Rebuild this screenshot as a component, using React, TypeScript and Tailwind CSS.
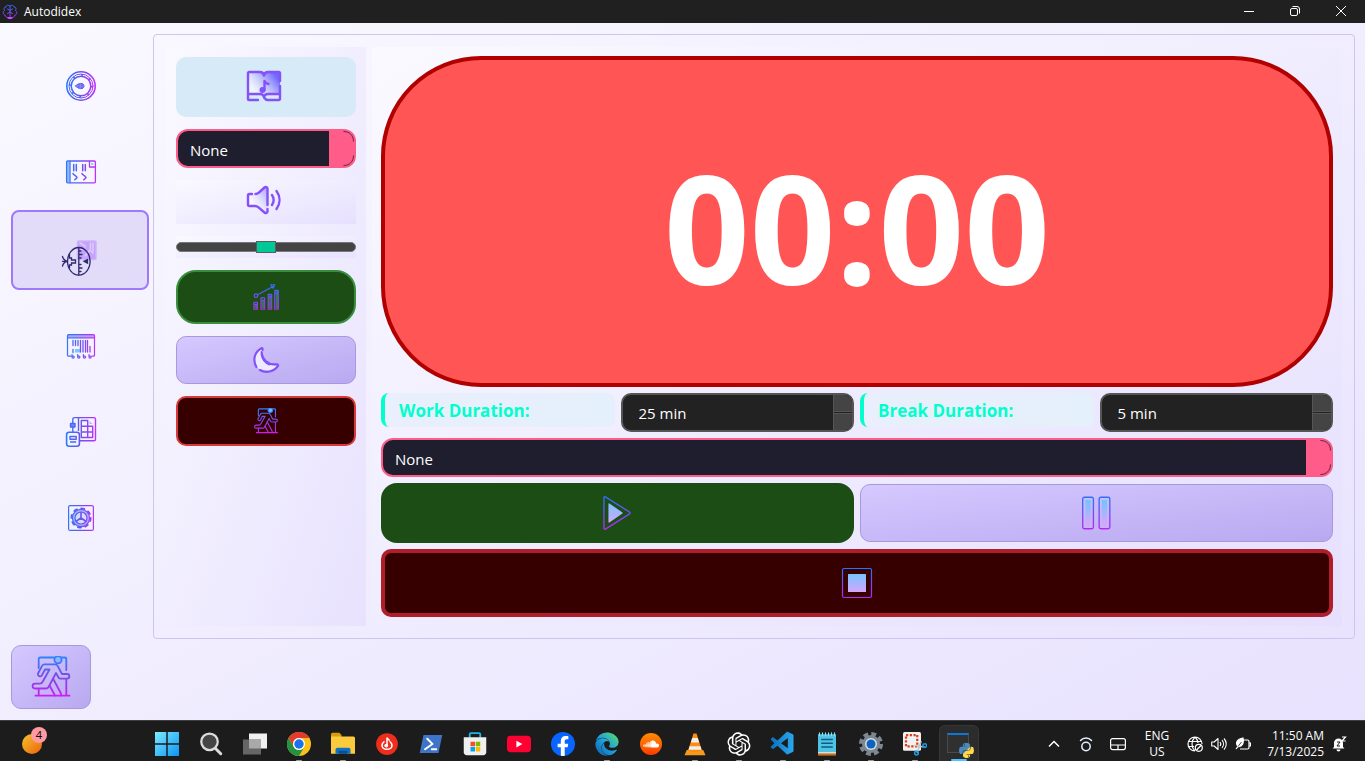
import { useState } from "react";
import type { ReactNode } from "react";
import { FaEdge, FaFacebookF, FaPython, FaSoundcloud } from "react-icons/fa";
import { RiOpenaiFill } from "react-icons/ri";
import { VscVscode } from "react-icons/vsc";
import clsx from "clsx";

/* Shared gradients, in the 32-unit space of the icons */
function Gradients() {
  return (
    <svg className="absolute size-0" aria-hidden="true">
      <defs>
        <linearGradient id="gh" gradientUnits="userSpaceOnUse" x1="0" y1="0" x2="32" y2="0">
          <stop offset="0" stopColor="#2b7bff" />
          <stop offset="0.5" stopColor="#6a55ea" />
          <stop offset="1" stopColor="#c62cff" />
        </linearGradient>
        <linearGradient id="gv" gradientUnits="userSpaceOnUse" x1="0" y1="0" x2="0" y2="32">
          <stop offset="0" stopColor="#2575ff" />
          <stop offset="1" stopColor="#bd24f5" />
        </linearGradient>
        <linearGradient id="gvTall" gradientUnits="userSpaceOnUse" x1="0" y1="0" x2="0" y2="41">
          <stop offset="0" stopColor="#2b86ff" />
          <stop offset="0.5" stopColor="#7a4be8" />
          <stop offset="1" stopColor="#d01cf5" />
        </linearGradient>
        <linearGradient id="gf" gradientUnits="userSpaceOnUse" x1="0" y1="4" x2="0" y2="28">
          <stop offset="0" stopColor="#68c8ff" />
          <stop offset="1" stopColor="#e2a2fb" />
        </linearGradient>
        <linearGradient id="gw" gradientUnits="userSpaceOnUse" x1="4" y1="26" x2="30" y2="6">
          <stop offset="0.2" stopColor="#ffffff" stopOpacity="0.6" />
          <stop offset="1" stopColor="#7068ff" />
        </linearGradient>
        <linearGradient id="edge" x1="0" y1="1" x2="1" y2="0">
          <stop offset="0" stopColor="#0c59a4" />
          <stop offset="0.5" stopColor="#1fa3dd" />
          <stop offset="1" stopColor="#5fe05c" />
        </linearGradient>
        <linearGradient id="vsc" x1="0" y1="0" x2="1" y2="0">
          <stop offset="0" stopColor="#0a6fb8" />
          <stop offset="1" stopColor="#2ba8f0" />
        </linearGradient>
        <linearGradient id="py" x1="0" y1="0" x2="1" y2="1">
          <stop offset="0.48" stopColor="#4b8bbe" />
          <stop offset="0.52" stopColor="#ffd94a" />
        </linearGradient>
        <linearGradient id="win" x1="0" y1="0" x2="1" y2="1">
          <stop offset="0" stopColor="#7deaff" />
          <stop offset="1" stopColor="#0a95f5" />
        </linearGradient>
        <linearGradient id="weather" x1="0" y1="0" x2="1" y2="1">
          <stop offset="0" stopColor="#f0c52c" />
          <stop offset="1" stopColor="#f0600c" />
        </linearGradient>
      </defs>
    </svg>
  );
}

type IconProps = { className?: string; children?: ReactNode };

function Icon({ className = "size-8", children }: IconProps) {
  return (
    <svg viewBox="0 0 32 32" fill="none" strokeLinecap="round" strokeLinejoin="round" className={className} aria-hidden="true">
      {children}
    </svg>
  );
}

const DialIcon = () => (
  <Icon>
    <g stroke="url(#gh)">
      <circle cx="16" cy="16" r="14.2" strokeWidth="1.6" />
      <circle cx="16" cy="16" r="12" strokeWidth="1" />
      <circle cx="16" cy="16" r="9.8" strokeWidth="1.5" />
      <circle cx="16" cy="16" r="10.9" strokeWidth="2.4" strokeDasharray="1.6 6.96" strokeLinecap="butt" />
      <path d="M10.5 16c2-1.9 3.8-2.6 5.2-2.6 2 0 3.300 1 3.300 2.600s-1.300 2.600-3.300 2.600c-1.400 0-3.200-.7-5.200-2.600z" fill="#7d8cf5" />
      <path d="M14 14v4M17 13.500v5" strokeWidth=".8" />
    </g>
  </Icon>
);

const BoardIcon = () => (
  <Icon>
    <path d="M2 5.500h2.500v21H2z" fill="#8dbcff" />
    <g stroke="url(#gh)" strokeWidth="1.300">
      <rect x="1.600" y="5" width="28.800" height="21.800" rx="1" />
      <path d="M5 5.500v21M24.500 5.500v5.500h5.500" />
      <path d="M8.700 8.500v6.200M11.300 8.500v6.200M17.700 8.500v6.200M20.300 8.500v6.200" strokeWidth="1.500" />
      <path d="M8 17.500c0 1.500 4 2.500 4 4.200l-2.200 2M17 17.500c0 1.500 4 2.500 4 4.200l-2.200 2" strokeWidth="1.500" />
    </g>
    <path d="M26 7h2.500v2H26z" fill="#8dd8ff" />
  </Icon>
);

const FishIcon = () => (
  <svg viewBox="0 0 40 40" fill="none" className="size-10" strokeLinecap="round" aria-hidden="true">
    <rect x="16.500" y="3" width="18.500" height="18.500" rx="1" fill="#c5a2fb" stroke="#cdb5f9" strokeWidth="1.500" />
    <path d="M19 5l5 3M29.500 5v6M32 5v8M24 18l5-6 3 3M20 12l4-2" stroke="#dfcdfc" strokeWidth="1.500" />
    <g stroke="#2e2a6e" strokeWidth="1.300">
      <ellipse cx="17.800" cy="23.300" rx="11.300" ry="13.800" />
      <path d="M17.800 10v27M18 13h2M18 16.500h3M18 20h2M18 26.500h2M18 30h3M18 33.500h2" />
      <path d="M1.500 18.500c.5 2.500 2 4 5 4.800M1.500 28c.5-2.500 2-4 5-4.700M1.500 23.300h5" />
      <path d="M8.500 16.500v3.500h2v2h4v3h-4v2h-2v3" />
      <path d="M23 23.300l3.500-1.800v3.600z" fill="#2e2a6e" />
    </g>
  </svg>
);

const BarcodeIcon = () => (
  <Icon>
    <g transform="translate(0 3)">
      <path d="M3 4h26v2.500H3z" fill="url(#gh)" opacity=".5" />
      <path d="M10 18h5v3.500h-5z" fill="#7fc6ff" />
      <g stroke="url(#gh)" strokeWidth="1.200">
        <path d="M6 25.200H3.500c-.6 0-1-.4-1-1V4.700c0-.6.4-1 1-1h25c.6 0 1 .4 1 1v19.500c0 .6-.4 1-1 1H27M3 6.800h26" />
        <path d="M8 9.500v5M10.500 9.500v5M13 9.500v5M15.500 9.500v11.500M18 9.500v11.500M20.500 9.500v11.500M22.500 9.500v11.500M25 15.500v5.500M8 18.500v3" strokeWidth="1.300" />
        <path d="M7 23.500v2.500c0 1.500 2.200 1.500 2.200 0s-2-.8-2-.8M12.700 23.500v2.500c0 1.500 2.200 1.500 2.200 0s-2-.8-2-.8M18.400 23.500v2.500c0 1.500 2.200 1.500 2.200 0s-2-.8-2-.8M24 23.500v2.500c0 1.500 2.200 1.500 2.200 0s-2-.8-2-.8" />
      </g>
    </g>
  </Icon>
);

const PlannerIcon = () => (
  <svg viewBox="0 -2 32 36" fill="none" strokeLinejoin="round" className="h-9 w-8" aria-hidden="true">
    <g transform="translate(0 2)">
      <g stroke="url(#gh)" strokeWidth="1.400">
        <path d="M7.800 7V3.200c0-1 .6-1.600 1.600-1.600h19.500c1 0 1.600.6 1.600 1.600v20c0 1-.6 1.600-1.600 1.600H15M13.500 2v13M7.800 11v5" />
        <path d="M16.300 4.500h6.400v17h-6.400zM22.700 10.300h5v11.200h-5M16.300 10.300h6.400M16.300 16h11.400" />
        <rect x="5.500" y="7.500" width="4.500" height="3.500" fill="#6f86f5" />
        <rect x="1.600" y="16.200" width="12.800" height="14" rx="2.500" strokeWidth="1.600" />
        <path d="M5 20.500h6.200v2.800H5zM5 26h6.200" />
      </g>
      <path d="M24.500 5v3h3z" fill="#8dc8ff" />
    </g>
  </svg>
);

const GearIcon = () => (
  <Icon>
    <g stroke="url(#gh)" strokeWidth="1.200" transform="translate(0 2)">
      <rect x="3.600" y="3.600" width="24.800" height="24.800" rx="1.500" />
      <circle cx="16" cy="16" r="8.600" fill="#9fb6fb" />
      <circle cx="16" cy="16" r="9.600" strokeWidth="1.900" strokeDasharray="3 4.540" />
      <circle cx="16" cy="16" r="6" fill="#d4dcff" />
      <path d="M16 10.500V16l-4.500 3M16 16l4.500 3" strokeWidth="1.600" />
    </g>
  </Icon>
);

function ExitIcon({ className, lit }: { className: string; lit?: boolean }) {
  return (
    <svg viewBox="0 0 40 42" fill="none" stroke="url(#gvTall)" strokeWidth="1.800" strokeLinecap="round" strokeLinejoin="round" className={className} aria-hidden="true">
      <path d="M7.700 12V3c0-1 .5-1.500 1.500-1.500H23M31 1.500h2.500c1 0 1.800.5 1.800 1.500v11M35.300 23v16M7.700 33v6" />
      <circle cx="27" cy="3.700" r="3.600" fill={lit ? "#6fc0ff" : "#8fb6ff"} />
      <path d="M4.500 39.700h34" />
      <path d="M14 13.500h4.500l-7 12.500c-.7 1.200-1.500 1.700-2.700 1.700H4a2.400 2.400 0 000 4.800h11c1.200 0 2-.4 2.600-1.500l7.400-14 2.500 4.500c.5.800 1.200 1.200 2.200 1.200h6.300a2.300 2.300 0 000-4.700h-5l-4.300-8c-.6-1-1.400-1.600-2.700-1.600H13.500c-1.200 0-2 .5-2.500 1.600L7 17.500c-1 2.500 3 3.800 4 1.700z" />
      <path d="M18.500 29.500l5.500 10M22 22.500l8 15v2" />
    </svg>
  );
}

const MusicBookIcon = () => (
  <svg viewBox="0 0 36 32" fill="none" className="h-8 w-9" strokeLinecap="round" strokeLinejoin="round" aria-hidden="true">
    <path d="M2 2h13l3 3 3-3h13v22H21l-3 3-3-3H2z" fill="url(#gw)" />
    <g stroke="#8352fa" strokeWidth="2.400">
      <path d="M34 11V3.500c0-1-.6-1.500-1.500-1.500H22c-2 0-3.500 1-4 3.500C17.500 3 16 2 14 2H3.500C2.600 2 2 2.500 2 3.500V29c0 .7.500 1 1 1h9M34 16v6.500c0 1-.5 1.500-1.500 1.500H22c-2 0-3.500.7-4 3-.5-2.300-2-3-4-3H3M34 24v4.500c0 1-.5 1.500-1.500 1.500H22c-1.500 0-3-1-4-2.500" />
      <path d="M18.500 20v-9c.8 2 2 2.500 4 3" />
    </g>
    <circle cx="16.500" cy="20" r="3" fill="#8352fa" />
  </svg>
);

const SpeakerIcon = () => (
  <svg viewBox="0 0 36 32" fill="none" className="h-8 w-9" strokeLinecap="round" strokeLinejoin="round" aria-hidden="true">
    <path d="M3 10h8l10-8v28l-10-8H3z" fill="url(#gw)" opacity=".8" />
    <g stroke="#8352fa" strokeWidth="2.400">
      <path d="M6 10H3.500C2.500 10 2 10.700 2 11.500v9c0 1 .5 1.500 1.500 1.500H9c1.500 0 2.500.4 3.500 1.300l6 5.200c1.300 1.100 3 .5 3-1.200V25M9.500 10c1.500-.1 2.500-.7 3.500-1.500L18.500 3.500c1.300-1.100 3-.5 3 1.200V21" />
      <path d="M26 11c2 3 2 7 0 10M30.500 7c4 5.500 4 12.500 0 18" />
    </g>
  </svg>
);

const ChartIcon = () => (
  <Icon className="size-7">
    <g fill="#4d8f7a" fillOpacity=".6">
      <path d="M3 24h3v5H3zM11 19h3v10h-3zM19 14h3v15h-3zM27 9h3v20h-3z" />
    </g>
    <g stroke="url(#gv)" strokeWidth="1.400">
      <path d="M2.200 22h4v8h-4zM10.300 17h4v13h-4zM18.500 13h4v17h-4zM26 8.500h4V30h-4zM2.200 24.500h4M10.300 20h4M18.500 16h4M26 11.500h4" />
      <circle cx="4.500" cy="14.500" r="2" />
      <path d="M6.500 13.500L24 4M21.500 2h4.500L24 6z" />
    </g>
  </Icon>
);

const MoonIcon = () => (
  <Icon className="size-7">
    <path d="M12 3C3 7 0 15 4 22c5 8 19 8 25 0-8 2-19-4-17-19z" fill="#eeebff" />
    <path d="M9 27.500c7 4 16 2 20.500-4.500.8-1.500-.2-2.300-1.500-2C18 22 11.500 15 11 7M12 4.500c.5-2-.7-2.600-2-1.500C2 8 1 17 5 24M11 9.500c1 6 5 10 9 11.500" stroke="#8352fa" strokeWidth="2.500" />
  </Icon>
);

const PlayIcon = () => (
  <Icon className="size-9">
    <path d="M3.500 2.500c0-.9.600-1.200 1.300-.8l21.500 13.500c.7.400.7 1.100 0 1.600L4.800 30.300c-.7.400-1.300.1-1.300-.8z" stroke="url(#gv)" strokeWidth="1.200" />
    <path d="M7.500 8c0-.5.400-.8.900-.5l11.500 8c.4.300.4.700 0 1l-11.500 8c-.5.300-.9 0-.9-.5z" fill="url(#gf)" />
  </Icon>
);

const PauseIcon = () => (
  <Icon className="size-9">
    <g stroke="url(#gv)" strokeWidth="1.200">
      <rect x="3.300" y="2" width="9.500" height="28" rx="1.500" />
      <rect x="17.900" y="2" width="9.500" height="28" rx="1.500" />
    </g>
    <path d="M5.700 4.500h4.700v23H5.700zM20.300 4.500h4.700v23h-4.700z" fill="url(#gf)" />
  </Icon>
);

const StopIcon = () => (
  <Icon>
    <rect x="1.500" y="1.500" width="29" height="29" rx="1.500" stroke="url(#gv)" strokeWidth="1.200" />
    <rect x="7" y="7" width="18" height="18" rx=".5" fill="url(#gf)" />
  </Icon>
);

const BrainLogo = () => (
  <Icon className="size-4">
    <g stroke="url(#gv)" strokeWidth="2">
      <path d="M15 4c-3-3-7-1-7 2-4 0-5 4-3 7-4 3-3 8 1 9 0 4 5 6 9 5M17 4c3-3 7-1 7 2 4 0 5 4 3 7 4 3 3 8-1 9 0 4-5 6-9 5M16 3v22M11 10l5 3 5-3M11 19l5-3 5 3" />
    </g>
    <path d="M13 28h6" stroke="#c04cff" strokeWidth="4" />
  </Icon>
);

function TitleBar() {
  return (
    <header className="flex h-[23px] shrink-0 items-center bg-[#202020] pr-px pl-0.5 text-white">
      <BrainLogo />
      <h1 className="pl-1.5 text-[12px] leading-4">Autodidex</h1>
      <div className="ml-auto flex h-full">
        <button aria-label="Minimize" className="flex w-[46px] items-center justify-center pb-0.5">
          <svg viewBox="0 0 10 10" className="size-2.5" stroke="white" aria-hidden="true"><path d="M0 5.500h10" /></svg>
        </button>
        <button aria-label="Restore" className="flex w-[45px] items-center justify-center pb-0.5">
          <svg viewBox="0 0 10 10" className="size-2.5" stroke="white" fill="none" aria-hidden="true">
            <rect x=".5" y="2.500" width="7" height="7" rx="1.500" />
            <path d="M2.500.5H7A2.500 2.500 0 019.500 3v4.500" />
          </svg>
        </button>
        <button aria-label="Close" className="flex w-[47px] items-center justify-center pb-0.5">
          <svg viewBox="0 0 10 10" className="size-2.5" stroke="white" aria-hidden="true"><path d="M0 0l10 10M10 0L0 10" /></svg>
        </button>
      </div>
    </header>
  );
}

const navItems = [
  { name: "Dashboard", icon: <DialIcon /> },
  { name: "Board", icon: <BoardIcon /> },
  { name: "Focus timer", icon: <FishIcon />, active: true },
  { name: "Records", icon: <BarcodeIcon /> },
  { name: "Planner", icon: <PlannerIcon /> },
  { name: "Settings", icon: <GearIcon /> },
];

function SideNav() {
  return (
    <nav className="flex w-[138px] shrink-0 flex-col gap-1.5 pt-1">
      {navItems.map((item) => (
        <button
          key={item.name}
          aria-label={item.name}
          aria-current={item.active ? "page" : undefined}
          className={clsx(
            "flex h-20 items-center justify-center rounded-lg border-2 pt-4 pl-0.5",
            item.active ? "border-[#a078fc] bg-[#e2dcf9]" : "border-transparent",
          )}
        >
          {item.icon}
        </button>
      ))}
    </nav>
  );
}

function ComboBox({ id, label }: { id: string; label: string }) {
  return (
    <div className="relative">
      <label htmlFor={id} className="sr-only">{label}</label>
      <select
        id={id}
        className="block h-[39px] w-full appearance-none rounded-xl border-2 border-[#ff5c8a] bg-[linear-gradient(to_left,#ff5c8a_25px,#1e1e2e_25px)] px-3 pt-0.5 text-[15px] leading-8 text-white outline-none"
      >
        <option>None</option>
      </select>
      <svg viewBox="0 0 12 35" fill="none" stroke="#5b2744" className="pointer-events-none absolute top-0.5 right-0.5 h-[35px] w-3" aria-hidden="true">
        <path d="M1.500.5c6 0 10 4 10 10M1.500 34.500c6 0 10-4 10-10" />
      </svg>
    </div>
  );
}

function ToolColumn() {
  return (
    <aside className="flex w-[200px] shrink-0 flex-col gap-3 bg-linear-to-br from-[#faf9ff] to-[#e8e2fe] p-2.5">
      <button aria-label="Music library" className="flex h-[60px] items-center justify-center rounded-[10px] bg-[#d7eaf7] pr-1 pb-0.5">
        <MusicBookIcon />
      </button>
      <ComboBox id="track" label="Track" />
      <div className="flex h-11 items-center justify-center bg-linear-to-br from-[#faf9ff] to-[#e6e0fe] pr-1 pb-1">
        <SpeakerIcon />
      </div>
      <div className="flex h-[22px] items-center bg-linear-to-br from-[#faf9ff] to-[#e8e2fe]">
        <input
          type="range"
          aria-label="Volume"
          defaultValue={50}
          className="h-2.5 w-full appearance-none rounded-[5px] border border-[#777777] bg-[#444444] [&::-webkit-slider-thumb]:h-3 [&::-webkit-slider-thumb]:w-5 [&::-webkit-slider-thumb]:appearance-none [&::-webkit-slider-thumb]:border [&::-webkit-slider-thumb]:border-[#5c5c5c] [&::-webkit-slider-thumb]:bg-[#00c896]"
        />
      </div>
      <button aria-label="Statistics" className="flex h-[54px] items-center justify-center rounded-[20px] border-2 border-[#388e3c] bg-[#1b4d14]">
        <ChartIcon />
      </button>
      <button aria-label="Night mode" className="flex h-12 items-center justify-center rounded-[10px] border border-[#a998de] bg-linear-to-br from-[#d5c9ff] to-[#b9a8f0]">
        <MoonIcon />
      </button>
      <button aria-label="Leave session" className="flex h-[50px] items-center justify-center rounded-[10px] border-2 border-[#d83a3a] bg-[#360000]">
        <ExitIcon className="h-[26px] w-[26px]" lit />
      </button>
    </aside>
  );
}

function DurationField({ id, label, start }: { id: string; label: string; start: number }) {
  const [minutes, setMinutes] = useState(start);
  return (
    <>
      <label
        htmlFor={id}
        className="flex h-[34px] items-center rounded-lg border-l-4 border-[#00ffcc] bg-linear-to-r from-[#e9effc] to-[#e4f0fb] pt-0.5 pl-3.5 text-[17px] font-bold text-[#00ffcc]"
      >
        {label}
      </label>
      <div className="flex h-[39px] overflow-hidden rounded-[10px] border-2 border-[#555555] bg-[#222222]">
        <input id={id} readOnly value={`${minutes} min`} className="min-w-0 flex-1 bg-transparent pt-0.5 pl-4 text-[15px] text-white outline-none" />
        <div className="flex w-[19px] flex-col gap-px border-l border-[#555555] bg-[#222222]">
          <button aria-label={`Increase ${label}`} onClick={() => setMinutes(minutes + 1)} className="flex-1 border-b border-[#555555] bg-[#444444]" />
          <button aria-label={`Decrease ${label}`} onClick={() => setMinutes(Math.max(1, minutes - 1))} className="flex-1 border-t border-[#555555] bg-[#444444]" />
        </div>
      </div>
    </>
  );
}

function TimerPanel() {
  return (
    <section className="flex min-w-0 flex-1 flex-col gap-1.5 bg-linear-to-br from-[#faf9ff] to-[#e6e0fe] p-[9px]">
      <div className="flex min-h-60 flex-1 items-center justify-center rounded-[100px] border-4 border-[#b00000] bg-[#ff5555] pt-2.5">
        <time className="text-[150px] leading-none font-bold text-white">00:00</time>
      </div>
      <div className="grid grid-cols-4 gap-1.5">
        <DurationField id="work" label="Work Duration:" start={25} />
        <DurationField id="break" label="Break Duration:" start={5} />
      </div>
      <ComboBox id="task" label="Task" />
      <div className="grid h-[60px] grid-cols-2 gap-1.5">
        <button aria-label="Start" className="flex items-center justify-center rounded-2xl bg-[#1b4d14]">
          <PlayIcon />
        </button>
        <button aria-label="Pause" className="my-px flex items-center justify-center rounded-[10px] border border-[#a998de] bg-linear-to-br from-[#d5c9ff] to-[#b9a8f0]">
          <PauseIcon />
        </button>
      </div>
      <button aria-label="Stop" className="flex h-[68px] shrink-0 items-center justify-center rounded-[10px] border-4 border-[#b01e2c] bg-[#360000]">
        <StopIcon />
      </button>
    </section>
  );
}

type TaskApp = { name: string; icon: ReactNode; open?: boolean; active?: boolean };

const taskApps: TaskApp[] = [
  {
    name: "Start",
    icon: <Icon className="size-6"><path d="M0 0h15v15H0zM17 0h15v15H17zM0 17h15v15H0zM17 17h15v15H17z" fill="url(#win)" /></Icon>,
  },
  {
    name: "Search",
    icon: <Icon className="size-6"><circle cx="14" cy="13" r="11" fill="#454545" stroke="#dcdcdc" strokeWidth="3" /><path d="M22 22l7 7" stroke="#dcdcdc" strokeWidth="4" /></Icon>,
  },
  {
    name: "Task view",
    icon: <Icon className="size-6"><path d="M8 2h24v20H8z" fill="#f0f0f0" /><path d="M0 10h24v20H0z" fill="#666666" /><path d="M8 10h16v12H8z" fill="#a9a9a9" /></Icon>,
  },
  {
    name: "Chrome",
    open: true,
    icon: (
      <Icon className="size-6">
        <circle cx="16" cy="16" r="16" fill="#fbc116" />
        <path d="M2.100 8A16 16 0 0129.900 8H16a8 8 0 00-7 12z" fill="#e33b2e" />
        <path d="M2.100 8A16 16 0 0016 32l7-12a8 8 0 01-14 0z" fill="#229342" />
        <circle cx="16" cy="16" r="8" fill="white" /><circle cx="16" cy="16" r="6.300" fill="#1a73e8" />
      </Icon>
    ),
  },
  {
    name: "File Explorer",
    open: true,
    icon: (
      <Icon className="size-6">
        <path d="M0 3c0-1 1-2 2-2h9l3 3v6H0z" fill="#dd9c0c" />
        <path d="M0 6h30c1 0 2 1 2 2v21H0z" fill="#fccb3d" />
        <path d="M6 29v-5c0-2 1-3 3-3h14c2 0 3 1 3 3v5z" fill="#0f72c4" /><path d="M10 25h12v4H10z" fill="#0a4f90" />
      </Icon>
    ),
  },
  {
    name: "Music cutter",
    icon: (
      <Icon className="size-6">
        <circle cx="16" cy="16" r="14.500" fill="#ef2d1d" />
        <path d="M16 17V8l3 3M12 13c-4 3-4 10 4 10s8-7 4-10" stroke="white" strokeWidth="2" /><circle cx="15" cy="18" r="2.500" fill="white" />
      </Icon>
    ),
  },
  {
    name: "PowerShell",
    icon: <Icon className="size-6"><path d="M6 4h25l-5 24H1z" fill="#3f75c9" /><path d="M11 9l7 7-10 7M17 23h6" stroke="white" strokeWidth="2.500" /></Icon>,
  },
  {
    name: "Microsoft Store",
    icon: (
      <Icon className="size-6">
        <path d="M9 8V3c0-1 .6-1.500 1.500-1.500h11c1 0 1.500.5 1.500 1.500v5" stroke="#1fb4e6" strokeWidth="2.500" />
        <path d="M1 7h30v20c0 2-1.500 4-4 4H5c-2.500 0-4-2-4-4z" fill="#efefef" />
        <path d="M10 13h6v6h-6z" fill="#f25022" /><path d="M17 13h6v6h-6z" fill="#7fba00" /><path d="M10 20h6v6h-6z" fill="#00a4ef" /><path d="M17 20h6v6h-6z" fill="#ffb900" />
      </Icon>
    ),
  },
  {
    name: "YouTube",
    icon: <Icon className="size-6"><rect y="5" width="32" height="22" rx="5" fill="#ff0033" /><path d="M12.500 11.500v9l8-4.500z" fill="white" /></Icon>,
  },
  {
    name: "Facebook",
    icon: <span className="flex size-6 items-end justify-center overflow-hidden rounded-full bg-[#0866ff]"><FaFacebookF className="size-5 text-white" /></span>,
  },
  { name: "Edge", open: true, icon: <FaEdge className="size-6" fill="url(#edge)" /> },
  {
    name: "SoundCloud",
    icon: <span className="flex size-[22px] items-center justify-center rounded-full bg-linear-to-b from-[#ff8a00] to-[#ff3600]"><FaSoundcloud className="size-4 text-white" /></span>,
  },
  {
    name: "VLC",
    open: true,
    icon: (
      <Icon className="size-6">
        <path d="M14 2h4l8 25H6z" fill="#ff8a10" /><path d="M12.400 8h7.200l2 6H10.500zM8.800 19h14.500l1.500 4.500H7.300z" fill="#eeeeee" />
        <path d="M5 24h2c2 3.500 16 3.500 18 0h2l3 7H2z" fill="#f59a1d" />
      </Icon>
    ),
  },
  { name: "ChatGPT", open: true, icon: <RiOpenaiFill className="size-7 text-white" /> },
  { name: "Visual Studio Code", open: true, icon: <VscVscode className="size-7" fill="url(#vsc)" /> },
  {
    name: "Notepad",
    open: true,
    icon: (
      <Icon className="size-6">
        <path d="M4 3h24v26H4z" fill="#4fc3e4" /><path d="M4 28h24v3.500H4z" fill="#c96c1d" /><path d="M4 27h24v1.500H4z" fill="#f1efe8" />
        <path d="M6 1v4M10 1v4M14 1v4M18 1v4M22 1v4M26 1v4" stroke="#8ce0f5" strokeWidth="1.500" />
        <path d="M9 10h14M9 15h14M9 20h14" stroke="#0d5b88" strokeWidth="2" />
      </Icon>
    ),
  },
  {
    name: "Settings",
    open: true,
    icon: (
      <Icon className="size-6">
        <circle cx="16" cy="16" r="12" fill="#7c8792" /><circle cx="16" cy="16" r="13" stroke="#7c8792" strokeWidth="6" strokeDasharray="6.210 4" strokeLinecap="butt" />
        <circle cx="16" cy="16" r="8" fill="#d9dee4" /><circle cx="16" cy="16" r="6" fill="#0a64c0" />
      </Icon>
    ),
  },
  {
    name: "Snipping Tool",
    open: true,
    icon: (
      <Icon className="size-6">
        <rect width="24" height="25" rx="2" fill="#f1f1f1" /><rect x="4" y="4" width="15" height="15" stroke="#d8401c" strokeWidth="3" strokeDasharray="3 2" strokeLinecap="butt" />
        <path d="M19 27l5-14M28 20l-12-2" stroke="#bcc6cc" strokeWidth="2" /><circle cx="18" cy="28" r="2.500" stroke="#1c9be8" strokeWidth="2" /><circle cx="29" cy="18" r="2.500" stroke="#1c9be8" strokeWidth="2" />
      </Icon>
    ),
  },
  {
    name: "Python",
    active: true,
    icon: (
      <span className="relative block size-6">
        <span className="block h-5 w-[22px] border border-t-2 border-[#4a4a4a] border-t-[#0a78d4] bg-[#303030]" />
        <FaPython className="absolute -right-1 -bottom-0.5 size-[17px]" fill="url(#py)" />
      </span>
    ),
  },
];

function Taskbar() {
  return (
    <footer className="flex h-[41px] shrink-0 border-t border-[#3d4040] bg-[#1c1c1c] text-white">
      <div className="flex w-[145px] shrink-0 items-center pt-1 pl-[22px]">
        <button aria-label="Weather, 4 alerts" className="relative size-6">
          <svg viewBox="0 0 24 24" className="size-6" aria-hidden="true"><circle cx="10" cy="13" r="10" fill="url(#weather)" /></svg>
          <span className="absolute -top-1 left-[9px] flex size-4 items-center justify-center rounded-full bg-[#ff9aa2] text-[11px] leading-4 text-black">4</span>
        </button>
      </div>
      <div className="flex">
        {taskApps.map((app) => (
          <button
            key={app.name}
            aria-label={app.name}
            className="relative flex w-11 items-center justify-center pt-1"
          >
            <span className={clsx("flex h-9 w-10 items-center justify-center rounded-t-md pt-0.5", app.active && "border-x border-t border-[#363636] bg-[#2c2c2c]")}>{app.icon}</span>
            {(app.open || app.active) && (
              <span className={clsx("absolute bottom-0 rounded-full", app.active ? "h-0.5 w-4 bg-[#4cc2ff]" : "h-px w-1.5 bg-[#9a9a9a]")} />
            )}
          </button>
        ))}
      </div>
      <div className="ml-auto flex items-center pt-1.5 pr-[15px] text-[12px] leading-4">
        <button aria-label="Show hidden icons" className="flex w-8 justify-center">
          <svg viewBox="0 0 12 12" className="size-3" fill="none" stroke="white" strokeWidth="1.500" aria-hidden="true"><path d="M1 8.500l5-5 5 5" /></svg>
        </button>
        <button aria-label="Sync status" className="flex w-8 justify-center">
          <svg viewBox="0 0 16 16" className="size-4" fill="none" stroke="#e6efff" strokeWidth="1.500" strokeLinecap="round" aria-hidden="true"><circle cx="8" cy="10.500" r="4.200" /><path d="M2.500 4.500c3-3.500 8-3.500 11 0" /></svg>
        </button>
        <button aria-label="Touchpad" className="flex w-8 justify-center">
          <svg viewBox="0 0 16 16" className="size-4" fill="none" stroke="white" strokeWidth="1.200" aria-hidden="true"><rect x=".6" y="2.600" width="14.800" height="11" rx="2" /><path d="M1 9h14M8 9v4.500" /></svg>
        </button>
        <button className="w-[46px] text-center">ENG<br />US</button>
        <button aria-label="Network, sound and battery" className="flex items-center gap-2 px-[7px]">
          <svg viewBox="0 0 16 16" className="size-4" fill="none" stroke="white" strokeWidth="1.200" aria-hidden="true"><path d="M8 15a7 7 0 117-7M8 15c-4-4-4-10 0-14 2 2 3 4 3 6M1.500 5.500h13M1.500 10.500H7" /><circle cx="11.800" cy="11.800" r="3.500" /><path d="M9.500 14l4.500-4.500" /></svg>
          <svg viewBox="0 0 16 16" className="size-4" fill="none" stroke="white" strokeWidth="1.100" strokeLinejoin="round" aria-hidden="true"><path d="M.7 6h2.500L7 2.500v11L3.200 10H.7zM9 6c1 1.200 1 2.800 0 4M11 4.200c2 2.200 2 5.400 0 7.600M13 2.500c3 3.200 3 7.800 0 11" /></svg>
          <svg viewBox="0 0 16 16" className="size-4" fill="none" stroke="white" strokeWidth="1.200" aria-hidden="true"><path d="M8 4h4.500c.8 0 1.500.7 1.500 1.500v6c0 .8-.7 1.500-1.500 1.500H5M14.500 7h1v3h-1" /><path d="M1 13l2-2.500C0 7 2 3 8 2c1 5-.5 9-5 8.500z" fill="white" /><path d="M3 10.500L6.500 6" stroke="#1c1c1c" strokeWidth=".8" /></svg>
        </button>
        <button className="w-[66px] text-right">11:50 AM<br />7/13/2025</button>
        <button aria-label="Notifications" className="flex w-[26px] justify-center pl-1">
          <svg viewBox="0 0 16 16" className="size-4" aria-hidden="true"><path d="M3 11V7a4.500 4.500 0 019 0v4l1.500 1.500h-12zM5.500 13.500h4a2 2 0 01-4 0z" fill="white" /><path d="M6 6h3l-3 4h3" stroke="#1c1c1c" fill="none" /><path d="M11 1h3.500l-3.500 4h3.500" stroke="white" fill="none" strokeWidth="1.200" /></svg>
        </button>
      </div>
    </footer>
  );
}

export default function App() {
  return (
    <div className="flex min-h-screen flex-col font-['Open_Sans','Noto_Sans',sans-serif]">
      <Gradients />
      <TitleBar />
      <main className="flex flex-1 flex-col gap-1.5 bg-linear-to-br from-[#faf9ff] to-[#e8e2fe] p-[11px] pr-2.5">
        <div className="flex flex-1 gap-1">
          <SideNav />
          <div className="flex min-w-0 flex-1 gap-1.5 rounded border border-[#cdc5ef] p-3">
            <ToolColumn />
            <TimerPanel />
          </div>
        </div>
        <button aria-label="Exit" className="flex h-16 w-20 items-center justify-center rounded-[10px] border border-[#a998de] bg-linear-to-br from-[#d5c9ff] to-[#b9a8f0]">
          <ExitIcon className="h-[42px] w-10" />
        </button>
      </main>
      <Taskbar />
    </div>
  );
}
